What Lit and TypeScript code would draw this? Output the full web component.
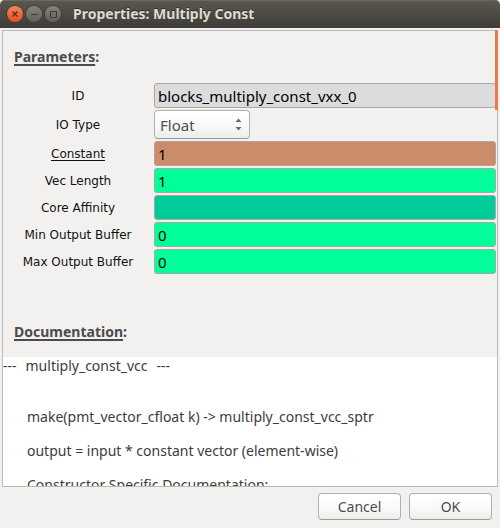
import { LitElement, html, css } from "lit";
import { customElement, property } from "lit/decorators.js";
import { classMap } from "lit/directives/class-map.js";

interface Field {
  id: string;
  label: string;
  value: string;
  tone: "readonly" | "complex" | "int" | "affinity";
  linked?: boolean;
}

const ID_FIELD: Field = { id: "block-id", label: "ID", value: "blocks_multiply_const_vxx_0", tone: "readonly" };

const FIELDS: Field[] = [
  { id: "constant", label: "Constant", value: "1", tone: "complex", linked: true },
  { id: "vec-length", label: "Vec Length", value: "1", tone: "int" },
  { id: "core-affinity", label: "Core Affinity", value: "", tone: "affinity" },
  { id: "min-buffer", label: "Min Output Buffer", value: "0", tone: "int" },
  { id: "max-buffer", label: "Max Output Buffer", value: "0", tone: "int" },
];

@customElement("title-bar")
export class TitleBar extends LitElement {
  @property() heading = "";

  static styles = css`
    :host {
      display: flex;
      align-items: center;
      gap: 3px;
      height: 28px;
      padding-left: 7px;
      box-sizing: border-box;
      border-radius: 5px 5px 0 0;
      background: linear-gradient(#5b584f, #3d3c37);
      box-shadow: inset 0 1px #6b685f;
      color: #dfdbd2;
    }
    button {
      width: 16px;
      height: 16px;
      padding: 0;
      border: 0;
      border-radius: 50%;
      background: linear-gradient(#85837b, #615f58);
      box-shadow: 0 0 0 1px #3f3d37;
      color: #3b3a35;
    }
    .close {
      background: linear-gradient(#f58560, #e2501f);
      color: #5a2a18;
    }
    svg {
      display: block;
      fill: none;
      stroke: currentColor;
    }
    h1 {
      margin: 0 0 0 9px;
      font: bold 14px/20px "Noto Sans", "Open Sans", sans-serif;
      text-shadow: 0 -1px #2e2d29;
      white-space: nowrap;
    }
  `;

  render() {
    return html`
      <button class="close" aria-label="Close">
        <svg width="16" height="16" viewBox="0 0 16 16"><path d="M5.5 5.5l5 5M10.5 5.5l-5 5" stroke-width="1.3" /></svg>
      </button>
      <button aria-label="Minimize">
        <svg width="16" height="16" viewBox="0 0 16 16"><path d="M5 8.5h7" /></svg>
      </button>
      <button aria-label="Maximize">
        <svg width="16" height="16" viewBox="0 0 16 16"><path d="M5.5 5.5h6v6h-6z" /></svg>
      </button>
      <h1>${this.heading}</h1>
    `;
  }
}

@customElement("app-root")
export class AppRoot extends LitElement {
  static styles = css`
    :host {
      display: flex;
      flex-direction: column;
      height: 100vh;
      background: #f2f1f0;
      font-family: "Noto Sans", "Open Sans", sans-serif;
      font-size: 14px;
      color: #3c3c3c;
    }
    .frame {
      position: relative;
      flex: 1;
      min-height: 0;
      display: flex;
      flex-direction: column;
      margin: 2px 2px 0;
      border: 1px solid #bdbab6;
    }
    .scroll {
      position: absolute;
      top: -1px;
      right: -1px;
      width: 3px;
      height: 80px;
      background: #f07746;
    }
    h2 {
      margin: 0;
      padding: 16px 11px;
      font-size: 14px;
      line-height: 20px;
      color: #4c4c4c;
    }
    h2 span {
      text-decoration: underline 2px;
      text-underline-offset: 2px;
      text-decoration-skip-ink: none;
    }
    .fields {
      display: grid;
      grid-template-columns: 150px 1fr;
      row-gap: 2px;
      align-items: center;
      padding-right: 1px;
    }
    label {
      text-align: center;
      font: 12px/16px "DejaVu Sans", sans-serif;
      color: #111;
    }
    .linked {
      text-decoration: underline;
      text-underline-offset: 2px;
    }
    input {
      width: 100%;
      height: 25px;
      margin: 0 0 0 1px;
      padding: 0 3px;
      box-sizing: border-box;
      border: 1px solid #aaa7a2;
      border-radius: 3px;
      font: inherit;
      font-size: 15px;
      color: #000;
    }
    .cell {
      display: flex;
    }
    .readonly {
      background: #dcdcdc;
    }
    .complex {
      background: #cc8c69;
    }
    .int {
      background: #00ff99;
    }
    .affinity {
      background: #00cc99;
    }
    .combo {
      display: grid;
      width: 96px;
      height: 29px;
      margin-left: 1px;
    }
    .combo > * {
      grid-area: 1 / 1;
    }
    select,
    .actions button {
      border: 1px solid #b3b0ac;
      border-bottom-color: #9d9a96;
      border-radius: 4px;
      background: linear-gradient(#fff, #fafafa 55%, #ececeb);
      font: inherit;
      color: #4c4c4c;
    }
    select {
      appearance: none;
      padding: 0 5px;
      font-size: 15px;
    }
    .arrows {
      justify-self: end;
      align-self: center;
      margin-right: 8px;
      pointer-events: none;
    }
    .docs-title {
      padding-top: 48px;
      padding-bottom: 15px;
    }
    .docs {
      flex: 1;
      min-height: 0;
      overflow: hidden;
      background: #fff;
      line-height: 17px;
    }
    .docs p {
      margin: 0 0 17px 24px;
    }
    .docs .name {
      display: flex;
      gap: 9px;
      margin: 0 0 34px;
    }
    .actions {
      display: flex;
      justify-content: flex-end;
      gap: 8px;
      padding: 6px 8px 8px;
    }
    .actions button {
      width: 83px;
      height: 27px;
      padding: 0;
    }
  `;

  private row(f: Field) {
    return html`
      <label for=${f.id} class=${classMap({ linked: !!f.linked })}>${f.label}</label>
      <div class="cell">
        <input id=${f.id} class=${f.tone} .value=${f.value} ?readonly=${f.tone === "readonly"} />
      </div>
    `;
  }

  render() {
    return html`
      <title-bar heading="Properties: Multiply Const"></title-bar>
      <main class="frame">
        <h2><span>Parameters</span>:</h2>
        <div class="fields">
          ${this.row(ID_FIELD)}
          <label for="io-type">IO Type</label>
          <div class="combo">
            <select id="io-type">
              <option>Complex</option>
              <option selected>Float</option>
              <option>Int</option>
              <option>Short</option>
            </select>
            <svg class="arrows" width="7" height="13" viewBox="0 0 7 13" fill="#6a6a6a">
              <path d="M0.5 4L3.5 0.5L6.5 4zM0.5 9L3.5 12.5L6.5 9z" />
            </svg>
          </div>
          ${FIELDS.map((f) => this.row(f))}
        </div>
        <h2 class="docs-title"><span>Documentation</span>:</h2>
        <div class="docs">
          <p class="name"><span>---</span><span>multiply_const_vcc</span><span>---</span></p>
          <p>make(pmt_vector_cfloat k) -&gt; multiply_const_vcc_sptr</p>
          <p>output = input * constant vector (element-wise)</p>
          <p>Constructor Specific Documentation:</p>
        </div>
        <div class="scroll"></div>
      </main>
      <footer class="actions">
        <button>Cancel</button>
        <button>OK</button>
      </footer>
    `;
  }
}
